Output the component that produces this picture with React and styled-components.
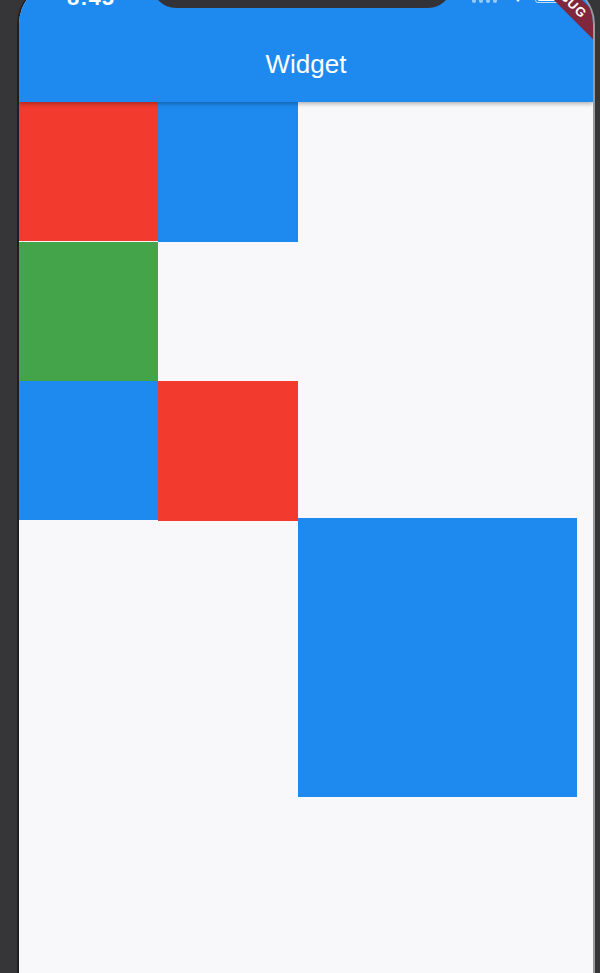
import React from 'react';
import styled, { createGlobalStyle } from 'styled-components';

const GlobalStyle = createGlobalStyle`
    html, body {
        margin: 0;
        padding: 0;
        background: #363538;
    }
`;

const BLUE = '#1e8aef';
const RED = '#f23a2f';
const GREEN = '#43a449';

const Frame = styled.div`
    display: flex;
    height: 973px;
    overflow: hidden;
    padding-left: 17px;
    padding-right: 5px;
    background: #363538;
`;

const Screen = styled.div`
    flex: 1;
    margin-top: -16px;
    display: flex;
    flex-direction: column;
    background: #f8f7fa;
    border-left: 2px solid #1f1e21;
    border-right: 2px solid #9a999c;
    border-radius: 40px 40px 0 0;
    overflow: hidden;
    position: relative;
`;

const AppBar = styled.div`
    background: ${BLUE};
    display: flex;
    flex-direction: column;
    box-shadow: 0 2px 4px rgba(0, 0, 0, 0.28);
    position: relative;
    z-index: 2;
`;

const StatusBar = styled.div`
    height: 36px;
    display: flex;
    align-items: flex-start;
    justify-content: space-between;
    padding: 2px 28px 0 48px;
    box-sizing: border-box;
    color: #fff;
    font-family: "Liberation Sans", Arial, sans-serif;
`;

const Time = styled.div`
    font-size: 22px;
    font-weight: 600;
    line-height: 24px;
    letter-spacing: 1px;
`;

const StatusIcons = styled.div`
    display: flex;
    align-items: center;
    gap: 10px;
    margin-top: 12px;
    margin-right: 4px;
`;

const Dots = styled.div`
    display: flex;
    gap: 3px;
    margin-right: 4px;
`;

const Dot = styled.span`
    width: 4px;
    height: 4px;
    border-radius: 50%;
    background: rgba(255, 255, 255, 0.55);
`;

const Battery = styled.div`
    width: 26px;
    height: 11px;
    border: 1.5px solid rgba(255, 255, 255, 0.7);
    border-radius: 3px;
    padding: 1.5px;
    box-sizing: border-box;
    margin-top: -6px;

    &::after {
        content: '';
        display: block;
        height: 100%;
        width: 100%;
        background: #fff;
        border-radius: 1px;
    }
`;

const Notch = styled.div`
    position: absolute;
    top: 0;
    left: 50%;
    width: 300px;
    height: 24px;
    margin-left: -154px;
    background: #333236;
    border-radius: 0 0 24px 24px;
    z-index: 3;
`;

const Toolbar = styled.div`
    height: 82px;
    display: flex;
    align-items: center;
    justify-content: center;
`;

const Title = styled.h1`
    margin: 0;
    margin-top: 6px;
    color: #fff;
    font-family: "Liberation Sans", Arial, sans-serif;
    font-weight: 400;
    font-size: 26px;
    line-height: 30px;
`;

const Banner = styled.div`
    position: absolute;
    top: 4px;
    left: 487px;
    width: 120px;
    height: 20px;
    background: #80263d;
    transform: rotate(45deg);
    color: #fff;
    font-family: "Liberation Sans", Arial, sans-serif;
    font-weight: 700;
    font-size: 13px;
    letter-spacing: 1px;
    line-height: 20px;
    text-align: center;
    z-index: 4;
`;

const Body = styled.div`
    display: flex;
    flex-direction: column;
    align-items: flex-start;
`;

const Row = styled.div`
    display: flex;
`;

const Square = styled.div`
    width: ${p => p.size}px;
    height: ${p => p.size}px;
    background: ${p => p.color};
    flex-shrink: 0;
`;

const BigSquare = styled(Square)`
    margin-left: 279px;
    margin-top: -3px;
`;

const Wifi = () => (
    <svg width="14" height="10" viewBox="0 0 14 10" style={{ marginTop: '-8px' }}>
        <path d="M7 10 L4 6.5 A4.5 4.5 0 0 1 10 6.5 Z" fill="#fff" />
        <path d="M2.2 4.6 A7 7 0 0 1 11.8 4.6" stroke="#fff" strokeWidth="1.6" fill="none" />
    </svg>
);

const App = () => {
    return (
        <Frame>
            <GlobalStyle />
            <Screen>
                <Notch />
                <Banner>DEBUG</Banner>
                <AppBar>
                    <StatusBar>
                        <Time>8:45</Time>
                        <StatusIcons>
                            <Dots>
                                <Dot /><Dot /><Dot /><Dot />
                            </Dots>
                            <Wifi />
                            <Battery />
                        </StatusIcons>
                    </StatusBar>
                    <Toolbar>
                        <Title>Widget</Title>
                    </Toolbar>
                </AppBar>
                <Body>
                    <Row>
                        <Square size={139} color={RED} />
                        <Square size={140} color={BLUE} />
                    </Row>
                    <Row>
                        <Square size={139} color={GREEN} />
                    </Row>
                    <Row>
                        <Square size={139} color={BLUE} />
                        <Square size={140} color={RED} />
                    </Row>
                    <BigSquare size={279} color={BLUE} />
                </Body>
            </Screen>
        </Frame>
    );
};

export default App;
